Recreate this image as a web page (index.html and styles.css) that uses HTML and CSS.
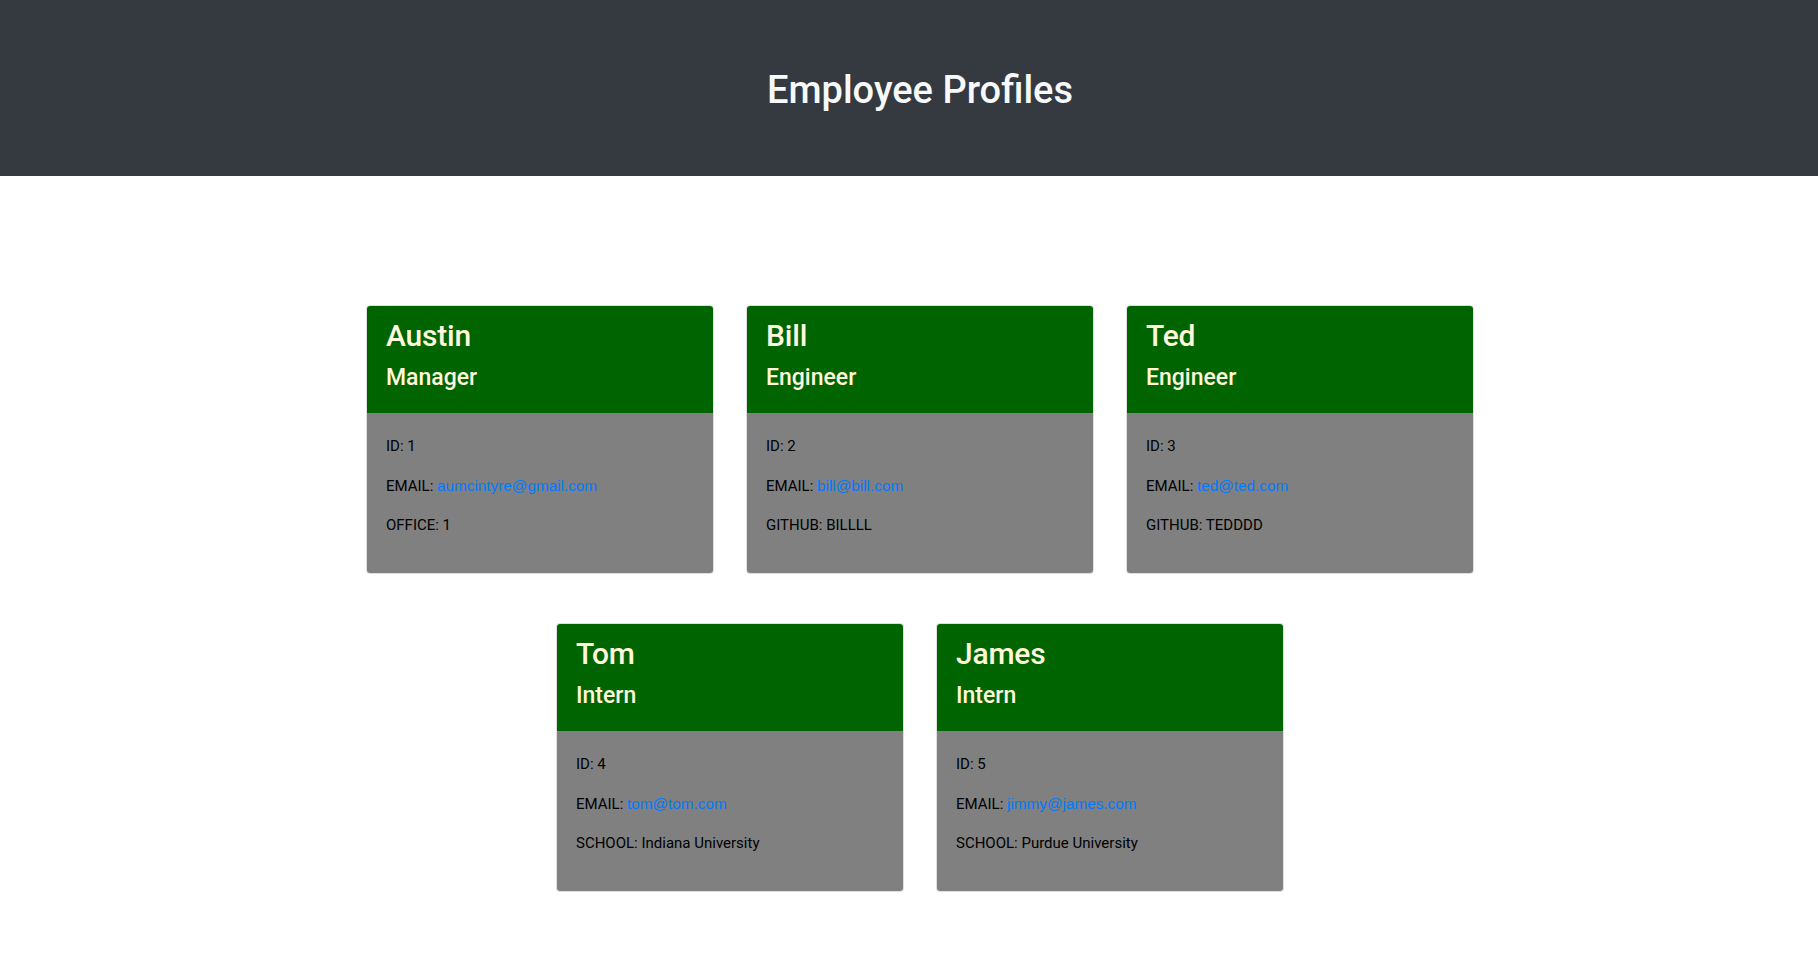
FILE: index.html
```html
<!DOCTYPE html>
<html lang="en">
<head>
<meta charset="utf-8">
<title>Employee Profiles</title>
<link rel="stylesheet" href="styles.css">
</head>
<body>
<header class="jumbo">
  <h1 class="jumbo-title">Employee Profiles</h1>
</header>
<main class="team">
  <div class="team-row">
    <div class="card">
      <div class="card-head">
        <h2 class="card-name">Austin</h2>
        <h4 class="card-role">Manager</h4>
      </div>
      <div class="card-body">
        <p class="card-line">ID: 1</p>
        <p class="card-line">EMAIL: <a class="mail" href="#">aumcintyre@gmail.com</a></p>
        <p class="card-line">OFFICE: 1</p>
      </div>
    </div>
    <div class="card">
      <div class="card-head">
        <h2 class="card-name">Bill</h2>
        <h4 class="card-role">Engineer</h4>
      </div>
      <div class="card-body">
        <p class="card-line">ID: 2</p>
        <p class="card-line">EMAIL: <a class="mail" href="#">bill@bill.com</a></p>
        <p class="card-line">GITHUB: BILLLL</p>
      </div>
    </div>
    <div class="card">
      <div class="card-head">
        <h2 class="card-name">Ted</h2>
        <h4 class="card-role">Engineer</h4>
      </div>
      <div class="card-body">
        <p class="card-line">ID: 3</p>
        <p class="card-line">EMAIL: <a class="mail" href="#">ted@ted.com</a></p>
        <p class="card-line">GITHUB: TEDDDD</p>
      </div>
    </div>
  </div>
  <div class="team-row">
    <div class="card">
      <div class="card-head">
        <h2 class="card-name">Tom</h2>
        <h4 class="card-role">Intern</h4>
      </div>
      <div class="card-body">
        <p class="card-line">ID: 4</p>
        <p class="card-line">EMAIL: <a class="mail" href="#">tom@tom.com</a></p>
        <p class="card-line">SCHOOL: Indiana University</p>
      </div>
    </div>
    <div class="card">
      <div class="card-head">
        <h2 class="card-name">James</h2>
        <h4 class="card-role">Intern</h4>
      </div>
      <div class="card-body">
        <p class="card-line">ID: 5</p>
        <p class="card-line">EMAIL: <a class="mail" href="#">jimmy@james.com</a></p>
        <p class="card-line">SCHOOL: Purdue University</p>
      </div>
    </div>
  </div>
</main>
</body>
</html>
```

FILE: styles.css
```css
* { box-sizing: border-box; }

html, body {
  margin: 0;
  padding: 0;
  background: #ffffff;
  font-family: Roboto, "Liberation Sans", Arial, sans-serif;
  color: #000000;
}

.jumbo {
  background: #343a40;
  height: 176px;
  display: flex;
  align-items: center;
  justify-content: center;
  padding: 4px 0 0 22px;
}

.jumbo-title {
  margin: 0;
  font-size: 38px;
  line-height: 46px;
  font-weight: 500;
  color: #f8f9fa;
}

.team {
  padding: 129px 0 40px 22px;
  display: flex;
  flex-direction: column;
  gap: 49px;
}

.team-row {
  display: flex;
  justify-content: center;
  gap: 32px;
}

.card {
  width: 348px;
  border: 1px solid rgba(0, 0, 0, 0.125);
  border-radius: 4px;
  overflow: hidden;
  background: #ffffff;
}

.card-head {
  background: #006400;
  padding: 12px 19px 21px;
  color: #fff8dc;
}

.card-name {
  margin: 0 0 10px;
  font-size: 30px;
  line-height: 36px;
  font-weight: 500;
  letter-spacing: -0.2px;
}

.card-role {
  margin: 0;
  font-size: 23px;
  line-height: 28px;
  font-weight: 500;
}

.card-body {
  background: #808080;
  padding: 21px 19px 36px;
}

.card-line {
  margin: 0 0 15.5px;
  font-size: 15px;
  line-height: 24px;
  color: #000000;
}

.card-line:last-child {
  margin-bottom: 0;
}

.mail {
  font-family: "Liberation Sans", Arial, sans-serif;
  font-size: 15.3px;
  color: #007bff;
  text-decoration: none;
}
```
